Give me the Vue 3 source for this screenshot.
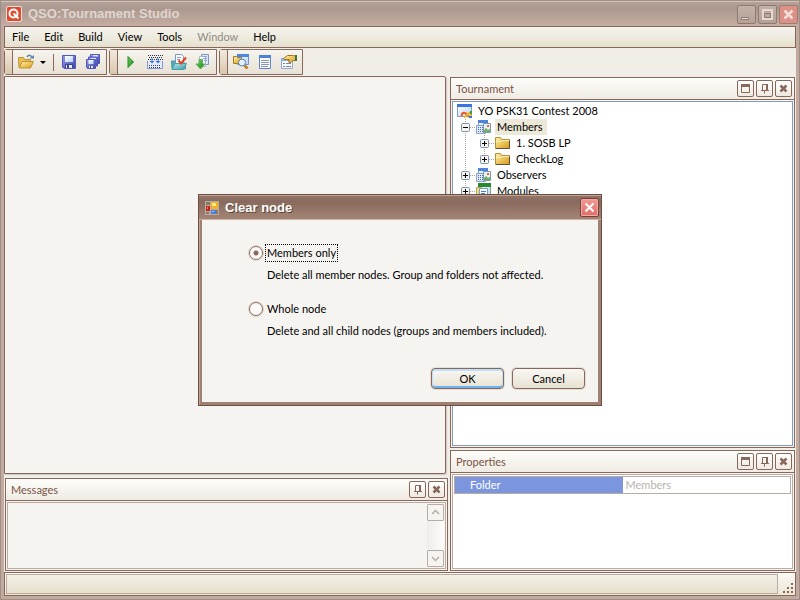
<script setup>
import { ref } from 'vue'

const menus = [
  { label: 'File' },
  { label: 'Edit' },
  { label: 'Build' },
  { label: 'View' },
  { label: 'Tools' },
  { label: 'Window', disabled: true },
  { label: 'Help' },
]

const nodes = [
  { label: 'YO PSK31 Contest 2008', icon: 'root', level: 0 },
  { label: 'Members', icon: 'group', level: 1, open: true, selected: true },
  { label: '1. SOSB LP', icon: 'folder', level: 2 },
  { label: 'CheckLog', icon: 'folder', level: 2, last: true },
  { label: 'Observers', icon: 'group', level: 1 },
  { label: 'Modules', icon: 'modules', level: 1, last: true },
]

const toolbars = [
  ['open', 'drop', 'sep', 'save', 'saveall'],
  ['run', 'build', 'check', 'import'],
  ['find', 'list', 'props'],
]

const mode = ref('members')
</script>

<template>
  <div class="window">
    <svg class="defs" aria-hidden="true">
      <defs>
        <linearGradient id="gold" x1="0" y1="0" x2="1" y2="1">
          <stop offset="0" stop-color="#fff3b0" /><stop offset="1" stop-color="#d9980f" />
        </linearGradient>
        <linearGradient id="blue" x1="0" y1="0" x2="1" y2="1">
          <stop offset="0" stop-color="#9a9eea" /><stop offset="1" stop-color="#3f47a8" />
        </linearGradient>
        <linearGradient id="sky" x1="0" y1="0" x2="1" y2="1">
          <stop offset="0" stop-color="#ffffff" /><stop offset="1" stop-color="#b9d3f3" />
        </linearGradient>
        <linearGradient id="green" x1="0" y1="0" x2="1" y2="1">
          <stop offset="0" stop-color="#7fdc6c" /><stop offset="1" stop-color="#0d7a12" />
        </linearGradient>
        <linearGradient id="teal" x1="0" y1="0" x2="1" y2="1">
          <stop offset="0" stop-color="#bdeaea" /><stop offset="1" stop-color="#3a9aa5" />
        </linearGradient>
      </defs>
      <symbol id="i-open" viewBox="0 0 16 16">
        <path d="M.5 3.500h5l1 2h6v8H1z" fill="#eec04e" stroke="#bf9135" />
        <path d="M4 7.500h11.5l-3 6.500H1.500z" fill="url(#gold)" stroke="#bf9135" />
        <path d="M9 3c1.500-2.500 3.500-2.500 5 .5" fill="none" stroke="#5b86ad" stroke-width="1.500" />
        <path d="M11.500 4.500H16V1z" fill="#5b86ad" />
      </symbol>
      <symbol id="i-drop" viewBox="0 0 10 10"><path d="M2 4h6L5 7z" fill="#000" /></symbol>
      <symbol id="i-save" viewBox="0 0 16 16">
        <path d="M1.500 1.500h13v13H3l-1.500-1.500z" fill="url(#blue)" stroke="#5158bb" />
        <path d="M4 2h8v6H4z" fill="url(#sky)" />
        <path d="M4 10h8v4H4z" fill="#3d4496" /><path d="M5 11h6v3H5z" fill="#e9edf8" /><path d="M6 11h2v3H6z" fill="#3d4496" />
      </symbol>
      <symbol id="i-saveall" viewBox="0 0 16 16">
        <path d="M5.500 .5h9v9h-9z" fill="url(#blue)" stroke="#5158bb" /><path d="M8 1h5v3H8z" fill="#dfe6fa" />
        <path d="M3.500 3h9v9h-9z" fill="url(#blue)" stroke="#5158bb" /><path d="M6 4h5v3H6z" fill="#dfe6fa" />
        <path d="M1.500 5.500h9v9h-8l-1-1z" fill="url(#blue)" stroke="#5158bb" /><path d="M3.500 6h5v4h-5z" fill="url(#sky)" />
        <path d="M4 12h4v2H4z" fill="#e9edf8" /><path d="M5 12h1v2H5z" fill="#3d4496" />
      </symbol>
      <symbol id="i-run" viewBox="0 0 16 16"><path d="M5 2.500v11l5.500-5.500z" fill="url(#green)" stroke="#1c8a20" /></symbol>
      <symbol id="i-build" viewBox="0 0 16 16">
        <path d="M1 1.500h15M2 3.500h13M1 5.500h15" stroke="#28304c" stroke-dasharray="1 1" />
        <path d="M.5 7v7.500h15V7" fill="#e4ecfb" stroke="#7f9ad0" />
        <path d="M2 11.500h12M2 13.500h12" stroke="#3a4260" stroke-dasharray="1 1" />
        <path d="M4.500 4h1v3h2l-2.500 2.500L2.500 7h2zM10.500 4h1v3h2L11 9.500 8.500 7h2z" fill="#397ae8" />
      </symbol>
      <symbol id="i-check" viewBox="0 0 16 16">
        <path d="M.5 7h4l1 2h9v6H1z" fill="#52a9b3" stroke="#479faa" />
        <path d="M4.500 .5h6l2 2V10h-8z" fill="#fafcff" stroke="#7f96c2" />
        <path d="M6 3.500h4M6 5.500h3" stroke="#7a9bcc" />
        <path d="M4 9.500h11.500l-3 6H1z" fill="url(#teal)" stroke="#479faa" />
        <path d="M7.500 6.500l2.500 3L15 3.500" fill="none" stroke="#ed3d18" stroke-width="2" />
      </symbol>
      <symbol id="i-import" viewBox="0 0 16 16">
        <path d="M6.500 .5h7v10h-7z" fill="#dce8fa" stroke="#7f96c2" /><path d="M4.500 2.500h6v10h-6z" fill="#fff" stroke="#a3b5d6" />
        <path d="M8 2.500h4M8 4.500h4M9 6.500h3" stroke="#8aa3cf" />
        <path d="M4 5.500h3.500V10H10l-4.500 5L1 10h3z" fill="url(#green)" stroke="#5fae57" />
      </symbol>
      <symbol id="i-find" viewBox="0 0 16 16">
        <path d="M4.500 .5h11v10h-11z" fill="url(#sky)" stroke="#6a92d4" /><path d="M4 0h12v3H4z" fill="#4c86e5" />
        <path d="M.5 2.500h3l1 1h4v6h-8z" fill="url(#gold)" stroke="#a87a1c" />
        <path d="M11.500 11.500l3 3" stroke="#c17b24" stroke-width="2.500" />
        <circle cx="9" cy="8.500" r="3.500" fill="#e1f1ff" stroke="#5d7faa" />
      </symbol>
      <symbol id="i-list" viewBox="0 0 16 16">
        <path d="M2.500 2h11v12.500h-11z" fill="#f6faff" stroke="#5e86c8" /><path d="M2 1h12v3H2z" fill="#4c80d9" />
        <path d="M4 6.500h8M4 8.500h8M4 10.500h8M4 12.500h7" stroke="#8c97ab" />
      </symbol>
      <symbol id="i-props" viewBox="0 0 16 16">
        <path d="M.5 4.500h11v10h-11z" fill="#f6faff" stroke="#8fa8d0" /><path d="M0 4h12v3H0z" fill="#8daee1" />
        <path d="M2 9.500h2M5 9.500h5M2 12.500h2M5 12.500h5" stroke="#6d86ae" />
        <path d="M2.500 4.500l4-3h5l3 .5v4.500h-2l-4 2.500-1-2 1-1.500h-5z" fill="url(#gold)" stroke="#9c7420" /><path d="M14 1h2v6h-2z" fill="#3d7736" />
      </symbol>
      <symbol id="i-root" viewBox="0 0 16 16">
        <path d="M.5 1.500h14v12H.5z" fill="url(#sky)" stroke="#8a9db8" /><path d="M0 1h15v3H0z" fill="#3a74df" />
        <path d="M5 13a2 2 0 1 1 4-2l3 3" fill="none" stroke="#ee5a23" stroke-width="2" />
        <path d="M7 14c3 1 3-5 5.500-4s1 3.500-1 4" fill="none" stroke="#edb722" stroke-width="2" />
        <path d="M13 8h2v3h-2z" fill="#3e9b40" /><path d="M12 13h3v2h-3z" fill="#3a74df" />
      </symbol>
      <symbol id="i-group" viewBox="0 0 16 16">
        <path d="M2.500 1.500h9v9h-9z" fill="url(#sky)" stroke="#7f9fd4" /><path d="M2 1h10v3H2z" fill="#4c84df" />
        <path d="M.5 6.500h9v8h-9z" fill="#dde8fb" stroke="#8ba6cd" />
        <path d="M2 8.500h6M2 10.500h6M2 12.500h6" stroke="#506c98" stroke-dasharray="1 1" />
        <path d="M7.500 4.500h7v9h-7z" fill="#eaf1f6" stroke="#7e97ad" />
        <path d="M8 13v-2l2-2 2 2 2-1v3z" fill="#6fae66" /><path d="M11 6h2v2h-2z" fill="#e4672f" />
      </symbol>
      <symbol id="i-folder" viewBox="0 0 16 16">
        <path d="M.5 2.500h5l1 2h8v9H.5z" fill="url(#gold)" stroke="#b98f35" />
        <path d="M1 6.500h5l1-1h7" fill="none" stroke="#fff4b8" /><path d="M1 13.500h13.500v-8" fill="none" stroke="#62513a" />
      </symbol>
      <symbol id="i-modules" viewBox="0 0 16 16">
        <path d="M2.500 .5h12v14h-12z" fill="url(#sky)" stroke="#7fb07e" /><path d="M2 0h13v4H2z" fill="#268a2d" />
        <path d="M.5 4.500h5l1 2h4v8H.5z" fill="#f3dd75" stroke="#b5a468" />
        <path d="M3.500 5.500h8v9h-8z" fill="#fff" stroke="#7b9ccb" /><path d="M5 8.500h5M5 10.500h4" stroke="#397ae8" />
      </symbol>
      <symbol id="i-max" viewBox="0 0 17 17"><path d="M4.500 4.500h8v8h-8z" fill="none" stroke="#87685a" /><path d="M4 4h9v3H4z" fill="#87685a" /></symbol>
      <symbol id="i-pin" viewBox="0 0 17 17"><path d="M6.500 10V4.500h4V10M5 10.500h8M8.500 10v3.500" fill="none" stroke="#87685a" /><path d="M10 4h2v6h-2z" fill="#87685a" /></symbol>
      <symbol id="i-close" viewBox="0 0 17 17"><path d="M5.500 5.500l6 6M11.500 5.500l-6 6" fill="none" stroke="#87685a" stroke-width="2.500" /></symbol>
    </svg>

    <header class="titlebar">
      <svg class="logo" viewBox="0 0 16 16" aria-hidden="true">
        <rect x=".5" y=".5" width="15" height="15" rx="1.500" fill="#e0492d" stroke="#f7e4df" />
        <circle cx="7.500" cy="7.500" r="4" fill="none" stroke="#fff" stroke-width="2" />
        <path d="M7.500 7.500l5 5" stroke="#fff" stroke-width="2" />
      </svg>
      <h1>QSO:Tournament Studio</h1>
      <div class="win-buttons">
        <button type="button" aria-label="Minimize">
          <svg viewBox="0 0 17 17"><path d="M3.500 11.500h7v2h-7z" fill="#e6dcd4" stroke="#8e7a70" /></svg>
        </button>
        <button type="button" aria-label="Maximize">
          <svg viewBox="0 0 17 17"><path d="M4 4h9v9H4z" fill="none" stroke="#e3d9d1" stroke-width="2" /><path d="M5.500 7.500h6v4h-6z" fill="none" stroke="#8e7a70" /></svg>
        </button>
        <button type="button" class="red" aria-label="Close">
          <svg viewBox="0 0 17 17"><path d="M4.500 4.500l8 8M12.500 4.500l-8 8" stroke="#f1dcd7" stroke-width="2.500" /></svg>
        </button>
      </div>
    </header>

    <div class="client">
      <nav class="menubar">
        <button v-for="m in menus" :key="m.label" type="button" :disabled="m.disabled">{{ m.label }}</button>
      </nav>

      <div class="toolbars">
        <div v-for="(bar, i) in toolbars" :key="i" class="toolbar">
          <span class="grip"></span>
          <template v-for="item in bar" :key="item">
            <span v-if="item === 'sep'" class="sep"></span>
            <button v-else type="button" :class="{ narrow: item === 'drop' }" :aria-label="item">
              <svg><use :href="'#i-' + item" /></svg>
            </button>
          </template>
        </div>
      </div>

      <main class="workspace">
        <div class="left">
          <section class="editor"></section>
          <section class="panel messages">
            <header>
              <h2>Messages</h2>
              <button v-for="b in ['pin', 'close']" :key="b" type="button" :aria-label="b">
                <svg viewBox="0 0 17 17"><use :href="'#i-' + b" /></svg>
              </button>
            </header>
            <div class="well log">
              <div class="scrollbar">
                <button type="button" aria-label="Scroll up"><svg viewBox="0 0 15 15"><path d="M4 9l3.500-3.500L11 9" fill="none" stroke="#b9aca3" stroke-width="1.500" /></svg></button>
                <button type="button" aria-label="Scroll down"><svg viewBox="0 0 15 15"><path d="M4 6l3.500 3.500L11 6" fill="none" stroke="#b9aca3" stroke-width="1.500" /></svg></button>
              </div>
            </div>
          </section>
        </div>

        <div class="right">
          <section class="panel tournament">
            <header>
              <h2>Tournament</h2>
              <button v-for="b in ['max', 'pin', 'close']" :key="b" type="button" :aria-label="b">
                <svg viewBox="0 0 17 17"><use :href="'#i-' + b" /></svg>
              </button>
            </header>
            <ul class="well tree">
              <li v-for="n in nodes" :key="n.label">
                <span v-if="n.level === 2" class="cell line"></span>
                <span v-if="n.level" class="cell branch line" :class="{ last: n.last }">
                  <svg viewBox="0 0 9 9">
                    <rect x=".5" y=".5" width="8" height="8" rx="1" fill="#f5f4ee" stroke="#7d92aa" />
                    <path :d="n.open ? 'M2 4.500h5' : 'M2 4.500h5M4.500 2v5'" stroke="#000" />
                  </svg>
                </span>
                <svg class="node-icon" viewBox="0 0 16 16"><use :href="'#i-' + n.icon" /></svg>
                <span class="node-label" :class="{ selected: n.selected }">{{ n.label }}</span>
              </li>
            </ul>
          </section>

          <section class="panel properties">
            <header>
              <h2>Properties</h2>
              <button v-for="b in ['max', 'pin', 'close']" :key="b" type="button" :aria-label="b">
                <svg viewBox="0 0 17 17"><use :href="'#i-' + b" /></svg>
              </button>
            </header>
            <div class="well grid">
              <table>
                <tbody>
                  <tr><th scope="row">Folder</th><td>Members</td></tr>
                </tbody>
              </table>
            </div>
          </section>
        </div>
      </main>

      <footer class="statusbar">
        <div class="status"></div>
        <svg class="size-grip" viewBox="0 0 12 12" aria-hidden="true">
          <path d="M9 1h2v2H9zM5 5h2v2H5zM9 5h2v2H9zM1 9h2v2H1zM5 9h2v2H5zM9 9h2v2H9z" fill="#87685a" />
        </svg>
      </footer>
    </div>

    <form class="dialog" role="dialog" aria-labelledby="dialog-title" @submit.prevent>
      <header>
        <svg class="form-icon" viewBox="0 0 14 14" aria-hidden="true">
          <path d="M0 0h14v14H0z" fill="#b9aca4" />
          <path d="M1 1h4v3H1zM1 11h3v2H1zM11 9h2v4h-2z" fill="#8d776b" />
          <path d="M1 5h4v5H1z" fill="#c92514" /><path d="M2 6h1v2H2z" fill="#f28b76" />
          <path d="M6 1h7v7H6z" fill="#f0b323" /><path d="M7 2h4v3H7z" fill="#ffe88c" />
          <path d="M6 9h5v4H6z" fill="#4a7ce0" /><path d="M7 10h2v1H7z" fill="#a9c8ff" />
        </svg>
        <h2 id="dialog-title">Clear node</h2>
        <button type="button" aria-label="Close">
          <svg viewBox="0 0 17 17"><path d="M4.500 4.500l8 8M12.500 4.500l-8 8" stroke="#fff" stroke-width="2" /></svg>
        </button>
      </header>
      <div class="body">
        <div class="option">
          <label><input v-model="mode" type="radio" name="mode" value="members" /><span :class="{ focus: mode === 'members' }">Members only</span></label>
          <p>Delete all member nodes. Group and folders not affected.</p>
        </div>
        <div class="option">
          <label><input v-model="mode" type="radio" name="mode" value="whole" /><span>Whole node</span></label>
          <p>Delete and all child nodes (groups and members included).</p>
        </div>
        <div class="actions">
          <button type="submit" class="default">OK</button>
          <button type="button">Cancel</button>
        </div>
      </div>
    </form>
  </div>
</template>

<style>
body {
  margin: 0;
}
</style>

<style scoped>
* {
  box-sizing: border-box;
}
.window {
  position: relative;
  display: flex;
  flex-direction: column;
  min-height: 100vh;
  padding: 0 3px 3px;
  border: 1px solid #a08f87;
  background: #c3aaa0;
  font: 11px/16px Lato, "Liberation Sans", sans-serif;
  color: #000;
}
.defs {
  position: absolute;
  width: 0;
  height: 0;
}
h1,
h2,
p,
ul {
  margin: 0;
  padding: 0;
}
button {
  margin: 0;
  padding: 0;
  border: 0;
  background: none;
  font: inherit;
  color: inherit;
}
svg {
  display: block;
  flex: none;
}
.titlebar {
  display: flex;
  align-items: center;
  height: 25px;
  margin: 0 -3px;
  padding: 0 1px 0 5px;
  border-top: 1px solid #d3c1b8;
  background: linear-gradient(#b3a096, #ab988e 30%, #c5aea4);
}
.logo {
  width: 16px;
  height: 16px;
}
.titlebar h1 {
  flex: 1;
  margin-left: 6px;
  font: bold 13px/16px "Liberation Sans", Arial, sans-serif;
  color: #e0d6cf;
}
.win-buttons {
  display: flex;
  gap: 2px;
}
.win-buttons button {
  width: 19px;
  height: 19px;
  border: 1px solid #8e7a70;
  border-radius: 2px;
  background: linear-gradient(#c3b1a7, #b5a197);
}
.win-buttons .red {
  border-color: #9e7c72;
  background: #dc9087;
}
.win-buttons svg {
  width: 17px;
  height: 17px;
}
.client {
  flex: 1;
  display: flex;
  flex-direction: column;
  background: #f1eee7;
}
.menubar {
  display: flex;
  align-items: center;
  gap: 15px;
  height: 22px;
  padding: 0 7px;
  border: 1px solid #87685a;
  background: linear-gradient(#f5f4ee, #e6e1cf);
}
.menubar button:disabled {
  color: #918e86;
}
.toolbars {
  display: flex;
  gap: 2px;
  height: 28px;
  padding: 1px 0;
}
.toolbar {
  display: flex;
  align-items: center;
  padding-right: 1px;
  border: 1px solid #87685a;
  border-radius: 3px 0 0 3px;
  background: linear-gradient(#f6f4ee, #e8e1d5);
}
.grip {
  align-self: stretch;
  width: 8px;
  margin-right: 1px;
  border-right: 1px solid #87685a;
  background: linear-gradient(#f3e9dc, #d9c7ae);
}
.toolbar button {
  display: grid;
  place-items: center;
  width: 24px;
  height: 22px;
}
.toolbar svg {
  width: 16px;
  height: 16px;
}
.toolbar .narrow,
.toolbar .narrow svg {
  width: 10px;
}
.toolbar .narrow svg {
  height: 10px;
}
.sep {
  width: 1px;
  height: 17px;
  margin: 0 3px 0 5px;
  background: #87685a;
}
.workspace {
  flex: 1;
  display: flex;
  gap: 2px;
  padding: 0 1px 1px 0;
}
.left {
  flex: 444;
  display: flex;
  flex-direction: column;
  gap: 4px;
}
.right {
  flex: 345;
  display: flex;
  flex-direction: column;
  gap: 2px;
  padding-top: 1px;
}
.editor {
  flex: 1;
  margin-right: 2px;
  border: 1px solid #87685a;
  border-radius: 0 2px 2px 0;
  background: #f6f4f1;
  box-shadow: 1px 1px 1px #cfc7bf;
}
.panel {
  display: flex;
  flex-direction: column;
  border: 1px solid #87685a;
  background: #f8f5f0;
}
.panel header {
  display: flex;
  align-items: center;
  gap: 2px;
  height: 22px;
  padding: 0 2px 0 5px;
  border-bottom: 1px solid #87685a;
  background: linear-gradient(#fdfdfb, #f0ece4);
}
.panel h2 {
  flex: 1;
  font-size: 11px;
  font-weight: normal;
  color: #7a5345;
}
.panel header button {
  width: 17px;
  height: 17px;
  border: 1px solid #87685a;
  border-radius: 2px;
  background: linear-gradient(#ffffff, #eee9e1);
}
.panel header svg {
  margin: -1px;
  width: 17px;
  height: 17px;
}
.well {
  flex: 1;
  margin: 1px;
  border: 1px solid #b9aca3;
}
.tournament {
  flex: 1;
}
.messages {
  min-height: 93px;
  margin-left: 1px;
}
.properties {
  min-height: 121px;
}
.log {
  display: flex;
  justify-content: flex-end;
  padding: 1px;
  background: #f6f4f1;
}
.scrollbar {
  display: flex;
  flex-direction: column;
  justify-content: space-between;
  width: 17px;
  background: linear-gradient(90deg, #efedea, #fdfcfb);
}
.scrollbar button {
  width: 17px;
  height: 17px;
  border: 1px solid #b9aca3;
  border-radius: 1px;
  background: #f6f4f1;
}
.scrollbar svg {
  width: 15px;
  height: 15px;
}
.tree {
  padding: 1px 4px;
  border-color: #7f9db9;
  background: #fff;
  list-style: none;
}
.tree li {
  display: flex;
  align-items: center;
  height: 16px;
  white-space: nowrap;
}
.cell {
  display: flex;
  align-items: center;
  width: 19px;
  height: 16px;
  padding-left: 4px;
}
.line {
  background: repeating-linear-gradient(#a9a49c 0 1px, #fff 1px 2px) 8px 0 / 1px 16px no-repeat;
}
.line.branch {
  background:
    repeating-linear-gradient(#a9a49c 0 1px, #fff 1px 2px) 8px 0 / 1px 16px no-repeat,
    repeating-linear-gradient(90deg, #a9a49c 0 1px, #fff 1px 2px) 9px 8px / 10px 1px no-repeat;
}
.line.branch.last {
  background-size: 1px 8px, 10px 1px;
}
.branch svg {
  width: 9px;
  height: 9px;
}
.node-icon {
  width: 16px;
  height: 16px;
  margin-right: 3px;
}
.node-label {
  padding: 0 4px 0 2px;
}
.node-label.selected {
  background: #ece9d8;
}
.grid {
  padding: 1px;
  background: #fff;
}
table {
  width: 100%;
  border: 1px solid #b9aca3;
  border-collapse: separate;
  border-spacing: 0;
  table-layout: fixed;
}
th,
td {
  padding: 0 3px;
  font-weight: normal;
  text-align: left;
}
th {
  padding-left: 15px;
  background: #7b96df;
  color: #fff;
}
td {
  color: #b9b4ae;
}
.statusbar {
  display: flex;
  align-items: flex-end;
  height: 24px;
  padding: 1px;
  border: 1px solid #87685a;
  background: linear-gradient(#fbf9f5, #ece5d6);
}
.status {
  flex: 1;
  align-self: stretch;
  margin-right: 4px;
  border: 1px solid #b9aca3;
  background: linear-gradient(#f2efe6, #e6e0cd);
}
.size-grip {
  width: 12px;
  height: 12px;
}
.dialog {
  position: absolute;
  top: 50%;
  left: 50%;
  width: 404px;
  transform: translate(-50%, -50%);
  border: 1px solid #6b4f43;
  background: #a08070;
  padding: 0 3px 3px;
  box-shadow: inset 1px 1px 0 #bfa396;
}
.dialog header {
  display: flex;
  align-items: center;
  height: 25px;
  margin: 0 -3px;
  padding: 0 2px 0 6px;
  border-bottom: 1px solid #c9b3a8;
  border-top: 1px solid #bfa396;
  background: linear-gradient(#927467, #886b5e 25%, #a48475);
}
.form-icon {
  width: 14px;
  height: 14px;
}
.dialog h2 {
  flex: 1;
  margin-left: 6px;
  font: bold 13px/16px "Liberation Sans", Arial, sans-serif;
  color: #fff;
  text-shadow: 1px 1px 0 #5f463b;
}
.dialog header button {
  width: 19px;
  height: 19px;
  border: 1px solid #7a3d38;
  border-radius: 2px;
  background: linear-gradient(#f09a94, #e06c6a);
  box-shadow: inset 0 0 0 1px #f2aaa4;
}
.dialog header button svg {
  width: 17px;
  height: 17px;
}
.body {
  padding: 24px 13px 13px 47px;
  background: #f6f4f1;
}
.option {
  height: 56px;
}
.option label {
  display: flex;
  align-items: center;
  gap: 2px;
  height: 18px;
}
.option input {
  appearance: none;
  width: 14px;
  height: 14px;
  margin: 0;
  border: 1px solid #8e7163;
  border-radius: 50%;
  background: #fbfaf8;
  box-shadow: 0 0 0 1px #e0d6cf;
}
.option input:checked {
  background: radial-gradient(circle, #87685a 0 2px, #fbfaf8 3px);
}
.option label span {
  padding: 0 1px;
  border: 1px dotted transparent;
  line-height: 16px;
}
.option label .focus {
  border-color: #000;
}
.option p {
  padding: 5px 0 0 18px;
  white-space: nowrap;
}
.actions {
  display: flex;
  justify-content: flex-end;
  gap: 8px;
  margin-top: 12px;
}
.actions button {
  width: 73px;
  height: 21px;
  border: 1px solid #87685a;
  border-radius: 4px;
  background: linear-gradient(#f8f7f3, #e8e2d2);
  box-shadow: 0 0 0 1px #e6dfd7;
}
.actions .default {
  box-shadow: inset 0 1px 0 1px #bfe0fb, inset 0 -1px 0 1px #69b1f2, 0 0 0 1px #e6dfd7;
}
</style>
